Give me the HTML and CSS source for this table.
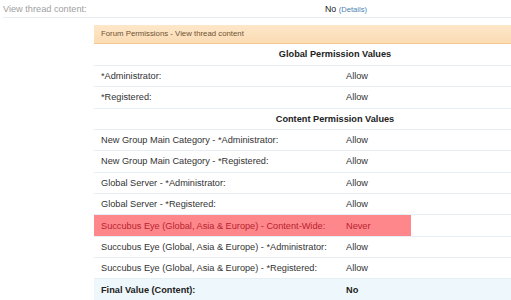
FILE: index.html
```html
<!DOCTYPE html>
<html lang="en">
  <head>
    <meta charset="UTF-8" />
    <title>Permission Analysis</title>
    <link rel="stylesheet" href="styles.css">
  </head>
  <body>
    <div class="perm-line">
      <span class="perm-label">View thread content:</span>
      <span class="perm-value">No <a href="#">(Details)</a></span>
    </div>

    <div class="perm-details">
      <div class="section-head">Forum Permissions - View thread content</div>
      <table class="perm-table">
        <tr class="group-head">
          <th colspan="3">Global Permission Values</th>
        </tr>
        <tr>
          <td class="name">*Administrator:</td>
          <td class="val">Allow</td>
          <td></td>
        </tr>
        <tr>
          <td class="name">*Registered:</td>
          <td class="val">Allow</td>
          <td></td>
        </tr>
        <tr class="group-head">
          <th colspan="3">Content Permission Values</th>
        </tr>
        <tr>
          <td class="name">New Group Main Category - *Administrator:</td>
          <td class="val">Allow</td>
          <td></td>
        </tr>
        <tr>
          <td class="name">New Group Main Category - *Registered:</td>
          <td class="val">Allow</td>
          <td></td>
        </tr>
        <tr>
          <td class="name">Global Server - *Administrator:</td>
          <td class="val">Allow</td>
          <td></td>
        </tr>
        <tr>
          <td class="name">Global Server - *Registered:</td>
          <td class="val">Allow</td>
          <td></td>
        </tr>
        <tr class="never">
          <td class="name">Succubus Eye (Global, Asia &amp; Europe) - Content-Wide:</td>
          <td class="val">Never</td>
          <td></td>
        </tr>
        <tr>
          <td class="name">Succubus Eye (Global, Asia &amp; Europe) - *Administrator:</td>
          <td class="val">Allow</td>
          <td></td>
        </tr>
        <tr>
          <td class="name">Succubus Eye (Global, Asia &amp; Europe) - *Registered:</td>
          <td class="val">Allow</td>
          <td></td>
        </tr>
        <tr class="final">
          <td class="name">Final Value (Content):</td>
          <td class="val">No</td>
          <td></td>
        </tr>
      </table>
    </div>
  </body>
</html>
```

FILE: styles.css
```css
body {
  font-family: "Liberation Sans", Arial, sans-serif;
  font-size: 9.2px;
  color: #333;
  background-color: white;
  margin: 0;
  overflow: hidden;
}

.perm-line {
  display: flex;
  height: 17px;
  align-items: center;
  margin-left: 3px;
  border-bottom: 1px solid #e4eef3;
  white-space: nowrap;
}

.perm-label {
  width: 322px;
  color: #a0a0a0;
  font-size: 9.2px;
}

.perm-value {
  font-size: 8.8px;
  color: #222;
}

.perm-value a {
  color: #4d7fb3;
  text-decoration: none;
  font-size: 7.6px;
}

.perm-details {
  margin-left: 94px;
  margin-top: 7px;
}

.section-head {
  height: 18px;
  line-height: 18px;
  padding-left: 7px;
  background: linear-gradient(#fde7c9, #fbdcb4);
  border-bottom: 1px solid #f4c890;
  color: #6f5232;
  font-size: 7.8px;
  white-space: nowrap;
}

.perm-table {
  width: 100%;
  border-collapse: collapse;
  white-space: nowrap;
}

.perm-table th,
.perm-table td {
  height: 21.36px;
  padding: 0 7px;
  border-bottom: 1px solid #e6eff4;
  box-sizing: border-box;
}

.perm-table th {
  font-size: 9.2px;
  color: #222;
  text-align: center;
  padding-left: 72px;
}

.perm-table td.name {
  width: 245px;
}

.perm-table td.val {
  width: 72px;
}

.perm-table tr.never td.name,
.perm-table tr.never td.val {
  background-color: #fe878c;
  color: #b8232d;
}

.perm-table tr.final td {
  background-color: #eef7fb;
  font-weight: bold;
  color: #222;
  border-bottom: none;
}
```
